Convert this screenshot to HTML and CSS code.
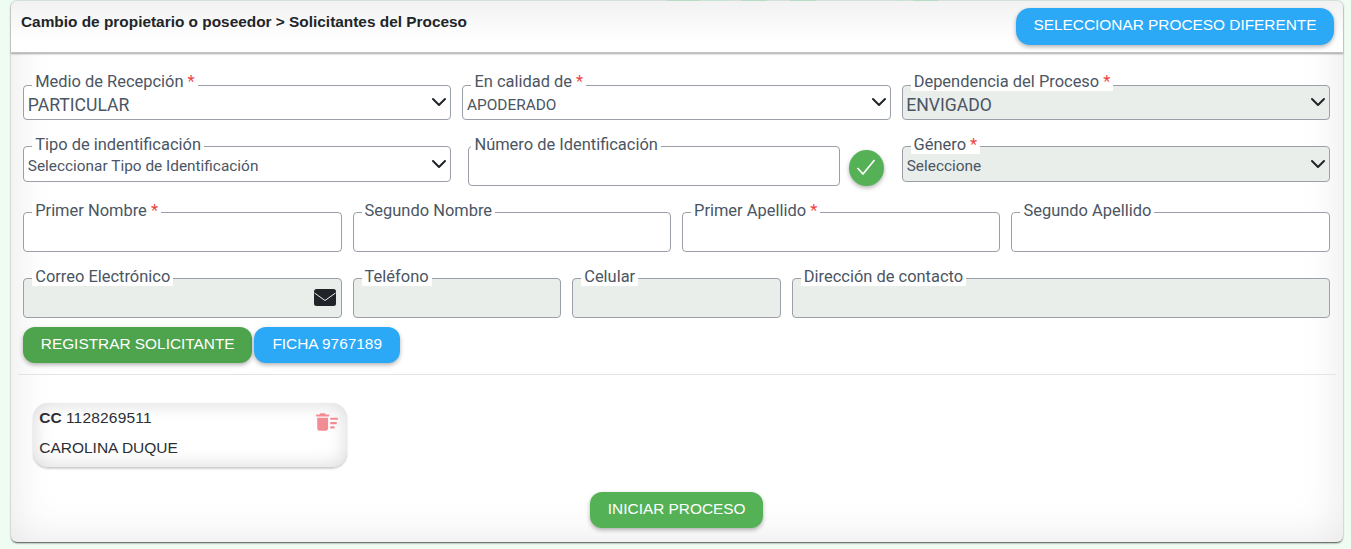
FILE: index.html
```html
<!DOCTYPE html>
<html lang="es">
<head>
<meta charset="utf-8">
<title>Solicitantes del Proceso</title>
<link rel="stylesheet" href="styles.css">
</head>
<body>
<main class="panel">
  <header class="panel-head">
    <h1 class="title">Cambio de propietario o poseedor &gt; Solicitantes del Proceso</h1>
    <button class="btn btn-blue btn-change" type="button">SELECCIONAR PROCESO DIFERENTE</button>
  </header>
  <div class="panel-body">
    <form class="form">
      <div class="grid row-1">
        <div class="field span-4 trim">
          <label class="label">Medio de Recepción <span class="req">*</span></label>
          <select class="control select"><option>PARTICULAR</option></select>
          <svg class="chevron" viewBox="0 0 16 16"><path d="m2 5 6 6 6-6"/></svg>
        </div>
        <div class="field span-4">
          <label class="label">En calidad de <span class="req">*</span></label>
          <select class="control select small"><option>APODERADO</option></select>
          <svg class="chevron" viewBox="0 0 16 16"><path d="m2 5 6 6 6-6"/></svg>
        </div>
        <div class="field span-4">
          <label class="label">Dependencia del Proceso <span class="req">*</span></label>
          <select class="control select disabled"><option>ENVIGADO</option></select>
          <svg class="chevron" viewBox="0 0 16 16"><path d="m2 5 6 6 6-6"/></svg>
        </div>
      </div>
      <div class="grid row-2">
        <div class="field span-4 tall-select trim">
          <label class="label">Tipo de indentificación</label>
          <select class="control select small"><option>Seleccionar Tipo de Identificación</option></select>
          <svg class="chevron" viewBox="0 0 16 16"><path d="m2 5 6 6 6-6"/></svg>
        </div>
        <div class="id-cell span-4">
          <div class="field id-field">
            <label class="label">Número de Identificación</label>
            <input class="control" type="text">
          </div>
          <button class="check" type="button" aria-label="Validar">
            <svg viewBox="0 0 24 24"><path d="M3.500 12l5.500 6L20.500 4"/></svg>
          </button>
        </div>
        <div class="field span-4 tall-select gender">
          <label class="label">Género <span class="req">*</span></label>
          <select class="control select small disabled"><option>Seleccione</option></select>
          <svg class="chevron" viewBox="0 0 16 16"><path d="m2 5 6 6 6-6"/></svg>
        </div>
      </div>
      <div class="grid row-3">
        <div class="field span-3"><label class="label">Primer Nombre <span class="req">*</span></label><input class="control" type="text"></div>
        <div class="field span-3"><label class="label">Segundo Nombre</label><input class="control" type="text"></div>
        <div class="field span-3 trim"><label class="label">Primer Apellido <span class="req">*</span></label><input class="control" type="text"></div>
        <div class="field span-3"><label class="label">Segundo Apellido</label><input class="control" type="text"></div>
      </div>
      <div class="grid row-4">
        <div class="field span-3">
          <label class="label">Correo Electrónico</label>
          <input class="control disabled" type="text">
          <svg class="mail" viewBox="0 0 22 17"><rect width="22" height="17" rx="2.500"/><path class="mail-fold" d="M0.500 4l10.500 7.500L21.500 4"/></svg>
        </div>
        <div class="field span-2 trim"><label class="label">Teléfono</label><input class="control disabled" type="text"></div>
        <div class="field span-2"><label class="label">Celular</label><input class="control disabled" type="text"></div>
        <div class="field span-5"><label class="label">Dirección de contacto</label><input class="control disabled" type="text"></div>
      </div>
      <div class="actions">
        <button class="btn btn-green-dark btn-register" type="button">REGISTRAR SOLICITANTE</button>
        <button class="btn btn-blue btn-ficha" type="button">FICHA 9767189</button>
      </div>
    </form>
    <hr class="divider">
    <section class="applicants">
      <article class="card">
        <div class="card-text">
          <p class="card-id"><strong>CC</strong> <span class="doc-number">1128269511</span></p>
          <p class="card-name">CAROLINA DUQUE</p>
        </div>
        <svg class="trash" viewBox="0 0 24 24"><path d="M15 16h4v2h-4zm0-8h7v2h-7zm0 4h6v2h-6zM3 18c0 1.100.9 2 2 2h6c1.100 0 2-.9 2-2V8H3v10zM14 5h-3l-1-1H6L5 5H2v2h12z"/></svg>
      </article>
    </section>
    <div class="start">
      <button class="btn btn-green btn-start" type="button">INICIAR PROCESO</button>
    </div>
  </div>
</main>
</body>
</html>
```
FILE: styles.css
```css
* { box-sizing: border-box; }
html, body { height: 100%; }
body {
  margin: 0;
  padding: 1px 8px 0 11px;
  background: #effcf2;
  font-family: "Liberation Sans", Arial, sans-serif;
  overflow: hidden;
}
body::before {
  content: "";
  position: absolute;
  top: 0;
  left: 667px;
  width: 271px;
  height: 1px;
  background: linear-gradient(90deg,
    #b6dcc5 0 33px, transparent 33px 39px,
    #c4e3d0 39px 63px, transparent 63px 74px,
    #b6dcc5 74px 100px, transparent 100px 123px,
    #b6dcc5 123px 149px, transparent 149px 229px,
    #c4e3d0 229px 238px, transparent 238px 246px,
    #b6dcc5 246px 271px);
}
.panel {
  height: 541px;
  background: #fff;
  border-radius: 6px;
  box-shadow: inset 0 0 44px rgba(0,0,0,.1), 0 2px 2px -1px rgba(0,0,0,.65), 0 0 2px rgba(0,0,0,.35);
  display: flex;
  flex-direction: column;
}
.panel-head {
  height: 52px;
  flex: none;
  display: flex;
  justify-content: space-between;
  align-items: flex-start;
  padding: 7px 9px 0 10px;
  border-radius: 6px 6px 0 0;
  background: linear-gradient(#f2f2f2, #fff 80%);
  box-shadow: 0 1px 2px rgba(0,0,0,.35);
  border-bottom: 1px solid #c4c4c4;
}
.title {
  margin: 5px 0 0;
  font-size: 15.400px;
  line-height: 17px;
  font-weight: 700;
  color: #212529;
}
.btn {
  border: 0;
  color: #fff;
  font-family: "Liberation Sans", Arial, sans-serif;
  font-size: 15.400px;
  border-radius: 12px;
  height: 36px;
  padding: 0 0 2px;
  box-shadow: 0 2px 4px rgba(0,0,0,.3);
  white-space: nowrap;
}
.btn-blue { background: #2ba9f7; }
.btn-green-dark { background: #4ea34d; }
.btn-green { background: #55b155; }
.btn-change { height: 37px; width: 318px; border-radius: 14px; padding-bottom: 3px; }
.panel-body {
  flex: 1;
  display: flex;
  flex-direction: column;
  padding: 32px 12.800px 0 12.200px;
}
.grid {
  display: grid;
  grid-template-columns: repeat(12, 1fr);
  column-gap: 10.670px;
  align-items: start;
}
.span-2 { grid-column: span 2; }
.span-3 { grid-column: span 3; }
.span-4 { grid-column: span 4; }
.span-5 { grid-column: span 5; }
.trim { margin-right: .800px; }
.row-1 { height: 35px; }
.row-2 { height: 40px; margin-top: 26px; }
.row-3 { height: 40px; margin-top: 26px; }
.row-4 { height: 40px; margin-top: 26px; }
.field { position: relative; height: 40px; }
.row-1 .field { height: 35px; }
.tall-select { height: 36px; }
.gender { margin-left: .500px; }
.gender .label { left: 8.400px; }
.label {
  position: absolute;
  top: -10px;
  left: 9px;
  padding: 0 3px;
  height: 18px;
  background: #fff;
  font-family: Roboto, sans-serif;
  font-size: 16.450px;
  line-height: 18px;
  color: #4b5563;
  white-space: nowrap;
  z-index: 1;
}
.row-1 .label { top: -12px; }
.id-field .label { left: 3px; }
.req { color: #ef4444; }
.control {
  display: block;
  width: 100%;
  height: 100%;
  margin: 0;
  padding: 0 24px 0 3.600px;
  background: #fff;
  border: 1px solid #9a9fa9;
  border-radius: 4px;
  font-family: Roboto, sans-serif;
  font-size: 17.600px;
  color: #4b5563;
  outline: 0;
}
.select { appearance: none; -webkit-appearance: none; padding-top: 3px; }
.row-1 .select { padding-top: 5px; }
.small { font-size: 15.400px; }
.disabled { background: #e9eeeb; }
.chevron {
  position: absolute;
  right: 4px;
  top: 9px;
  width: 16px;
  height: 16px;
  fill: none;
  stroke: #212529;
  stroke-width: 2;
  stroke-linecap: round;
  stroke-linejoin: round;
}
.tall-select .chevron { top: 10px; }
.id-cell {
  display: flex;
  align-items: flex-start;
  gap: 9px;
  padding: 0 7px 0 6px;
}
.id-field { flex: 1; }
.check {
  flex: none;
  width: 35px;
  height: 36px;
  margin-top: 4px;
  padding: 0;
  border: 0;
  border-radius: 50%;
  background: #55b155;
  box-shadow: 0 2px 4px rgba(0,0,0,.3);
  display: flex;
  align-items: center;
  justify-content: center;
}
.check svg {
  width: 24px;
  height: 24px;
  fill: none;
  stroke: #fff;
  stroke-width: 1.700;
}
.mail {
  position: absolute;
  right: 6px;
  top: 11px;
  width: 22px;
  height: 17px;
  fill: #212529;
}
.mail-fold { fill: none; stroke: #e9eeeb; stroke-width: 1; }
.actions { display: flex; gap: 2px; margin-top: 9px; }
.btn-register { width: 229px; }
.btn-ficha { width: 146px; }
.divider {
  margin: 11px -6px 0 -5px;
  border: 0;
  border-top: 1px solid #e3e5e4;
  height: 1px;
}
.applicants { padding: 28px 0 0 10px; }
.card {
  width: 314px;
  height: 65px;
  display: flex;
  justify-content: space-between;
  align-items: flex-start;
  padding: 6px 7px 0 6px;
  border-radius: 15px;
  background: #fff;
  border-bottom: 1px solid #d0d0d0;
  box-shadow: inset 0 0 20px rgba(0,0,0,.16), 0 1px 2px rgba(0,0,0,.18);
}
.card p { margin: 0; font-size: 15.500px; line-height: 18px; color: #2b2f33; }
.doc-number { letter-spacing: .2px; }
.card-name { margin-top: 12px !important; }
.trash { width: 26px; height: 26px; fill: #f28b94; }
.start { display: flex; justify-content: center; margin-top: 24px; }
.btn-start { width: 173px; }
```
